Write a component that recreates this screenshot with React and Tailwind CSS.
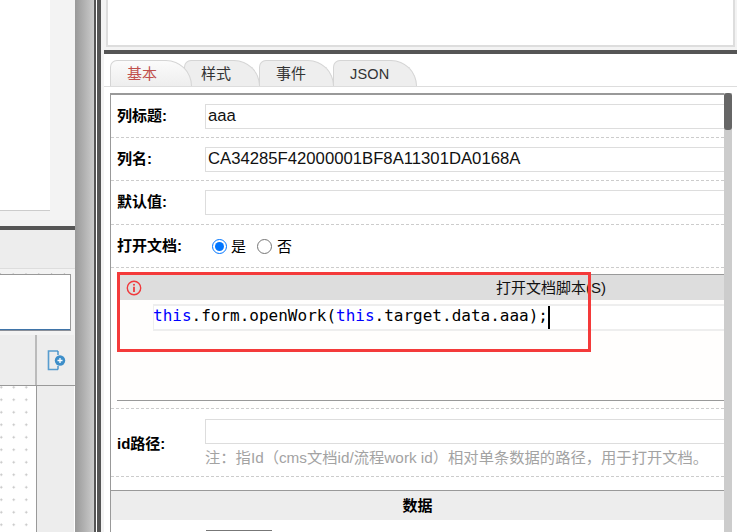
function Row({ label, h, children }) {
  return (
    <div className={`flex items-center shrink-0 ${h} border-b border-dashed border-[#cccccc]`}>
      <div className="w-[94px] shrink-0 pl-[6px] text-[15px] font-bold text-black">{label}</div>
      <div className="flex-1 min-w-0">{children}</div>
    </div>
  );
}

function Field({ value = "" }) {
  return (
    <div className="h-[25px] border-y border-l border-[#dddddd] pl-[2px] text-[16.7px] leading-[22px] text-[#111111] bg-white">
      {value}
    </div>
  );
}

function Radio({ on }) {
  return (
    <span
      className={`inline-flex w-[15px] h-[15px] rounded-full border-[1.5px] items-center justify-center bg-white ${
        on ? "border-[#0075ff]" : "border-[#767676]"
      }`}
    >
      {on && <span className="w-[9px] h-[9px] rounded-full bg-[#0075ff]" />}
    </span>
  );
}

function Tab({ children, active, z, w, ml }) {
  return (
    <div
      className={`relative h-[26px] pl-[16px] ${z} ${w} ${ml} border border-b-0 border-[#d5d5d5] rounded-tl-[7px] rounded-tr-[26px] text-[15px] leading-[26px] ${
        active ? "bg-gradient-to-b from-[#fbfbfb] to-[#eeeeee] text-[#c0504d]" : "bg-[#eeeeee] text-[#333333]"
      }`}
    >
      {children}
    </div>
  );
}

export default function App() {
  return (
    <div className="relative flex w-[737px] h-[532px] overflow-hidden bg-white font-['Liberation_Sans','Noto_Sans_CJK_SC',sans-serif]">
      {/* left column */}
      <div className="w-[75px] h-full shrink-0 flex flex-col bg-[#f3f3f3]">
        <div className="h-[226px] shrink-0">
          <div className="w-[50px] h-[211px] bg-white border-b border-[#cccccc]" />
        </div>
        <div className="h-[4px] shrink-0 bg-[#555555]" />
        <div className="h-[39px] shrink-0 bg-[#ededed] border-b border-[#dddddd]" />
        <div className="h-[66px] shrink-0 flex flex-col">
          <div className="h-[5px] shrink-0 bg-[radial-gradient(circle,#c4c4c4_0.8px,transparent_1px)] bg-[length:12.8px_5px] bg-[position:-6px_2px]" />
          <div className="h-[57px] w-[71px] bg-white border-t-[1.5px] border-r-[1.5px] border-b-[1.5px] border-t-[#999999] border-r-[#999999] border-b-[#8a8f98]">
            <div className="h-full border-b border-[#3f74a8]" />
          </div>
        </div>
        <div className="h-[50px] w-[74px] shrink-0 flex bg-[#ededed]">
          <div className="w-[35px] h-full" />
          <div className="w-[2px] h-full bg-[#bbbbbb]" />
          <div className="flex-1 flex items-center justify-center pl-[2px]">
            <svg width="19" height="21" viewBox="0 0 19 21" fill="none">
              <path d="M11 1H1.5V19.5H11" stroke="#3d8ec9" strokeWidth="1.6" opacity="0.85" />
              <path d="M11 1V5M11 16V19.5" stroke="#3d8ec9" strokeWidth="1.6" opacity="0.85" />
              <circle cx="13" cy="10.5" r="5.2" fill="#3d8ec9" />
              <path d="M10.5 10.5H15.5M13 8V13" stroke="#ffffff" strokeWidth="1.3" />
            </svg>
          </div>
        </div>
        <div className="flex-1 w-[75px] flex border-t border-[#999999]">
          <div className="w-[36px] h-full bg-white bg-[radial-gradient(circle,#c0c0c0_0.9px,transparent_1.1px)] bg-[length:12.5px_12.5px] bg-[position:-5px_-5px] border-r border-[#999999] box-content" />
          <div className="w-[37px] h-full bg-[#ededed]" />
          <div className="w-[1px] h-full bg-white" />
        </div>
      </div>

      {/* splitter */}
      <div className="w-[19px] h-full shrink-0 bg-gradient-to-r from-[#999999] to-[#cccccc]" />
      <div className="w-[1.5px] h-full shrink-0 bg-[#555555]" />
      <div className="w-[1.5px] h-full shrink-0 bg-white" />
      <div className="w-[4px] h-full shrink-0 bg-[#555555]" />
      <div className="w-[3px] h-full shrink-0 bg-[#f3f3f3]" />

      {/* right column */}
      <div className="flex-1 min-w-0 h-full flex flex-col bg-white">
        <div className="h-[50px] shrink-0 bg-[#f3f3f3] px-[2px]">
          <div className="h-[47px] bg-white border-x-2 border-b-2 border-[#dddddd]" />
        </div>
        <div className="h-[4px] shrink-0 bg-[#555555]" />

        {/* tabs */}
        <div className="h-[33px] shrink-0 pt-[6px] pl-[6px] flex items-start border-b border-[#dddddd]">
          <Tab active z="z-40" w="w-[82px]">基本</Tab>
          <Tab z="z-30" w="w-[76px]" ml="-ml-[8px]">样式</Tab>
          <Tab z="z-20" w="w-[75px]" ml="-ml-[1px]">事件</Tab>
          <Tab z="z-10" w="w-[84px]" ml="-ml-[1px]"><span className="text-[14.5px] tracking-[0.2px]">JSON</span></Tab>
        </div>

        {/* form + scrollbar */}
        <div className="flex-1 min-h-0 flex pl-[6px] pt-[6px] overflow-hidden">
          <div className="w-[614px] shrink-0 border-l border-t-2 border-[#999999] flex flex-col">
            <Row label="列标题:" h="h-[43px]"><Field value="aaa" /></Row>
            <Row label="列名:" h="h-[43px]"><Field value="CA34285F42000001BF8A11301DA0168A" /></Row>
            <Row label="默认值:" h="h-[44px]"><Field /></Row>
            <Row label="打开文档:" h="h-[43px]">
              <div className="flex items-center text-[15px] text-black pl-[7px]">
                <Radio on />
                <span className="ml-[4px] mt-[2px]">是</span>
                <span className="ml-[11px] flex"><Radio /></span>
                <span className="ml-[5px] mt-[2px]">否</span>
              </div>
            </Row>

            {/* script editor */}
            <div className="h-[141px] shrink-0 pt-[6px] pl-[6px] flex flex-col bg-[#fffefd] border-b border-dashed border-[#cccccc]">
              <div className="border-t border-[#999999]">
                <div className="relative h-[25px] ml-[3px] bg-[#dddddd] text-[15px] leading-[25px] text-[#111111] pl-[376px] whitespace-nowrap">
                  <svg className="absolute left-[6px] top-[5px]" width="16" height="16" viewBox="0 0 16 16" fill="none">
                    <circle cx="8" cy="8" r="6.7" stroke="#f0393c" strokeWidth="1.4" />
                    <path d="M8 6.8V12" stroke="#f0393c" strokeWidth="1.8" />
                    <circle cx="8" cy="4.7" r="1" fill="#f0393c" />
                  </svg>
                  打开文档脚本(S)
                </div>
              </div>
              <div className="mt-[4px] ml-[36px] h-[27px] border-y-2 border-l border-[#eeeeee] bg-white flex items-center font-['DejaVu_Sans_Mono',monospace] text-[16px] leading-[24px] text-black whitespace-pre">
                <div className="-ml-px -mt-[4px] flex items-center">
                  <span className="text-[#0000ff]">this</span>
                  <span>.form.openWork(</span>
                  <span className="text-[#0000ff]">this</span>
                  <span>.target.data.aaa);</span>
                </div>
                <span className="inline-block w-[2px] h-[23px] bg-black" />
              </div>
              <div className="mt-auto mb-[7px] h-[1.5px] bg-[#999999]" />
            </div>

            <div className="h-[68px] shrink-0 flex items-start border-b border-dashed border-[#cccccc]">
              <div className="w-[94px] shrink-0 pl-[6px] pt-[24px] text-[15px] font-bold text-black">id路径:</div>
              <div className="flex-1 min-w-0 pt-[10px]">
                <div className="h-[25px] border-y border-l border-[#dddddd] bg-white" />
                <div className="mt-[4px] text-[15.3px] leading-[20px] text-[#a3a3a3] whitespace-nowrap">注：指Id（cms文档id/流程work id）相对单条数据的路径，用于打开文档。</div>
              </div>
            </div>

            <div className="mt-[13px] h-[30px] shrink-0 border-t-[1.5px] border-[#999999] bg-[#ededed] text-center text-[15px] font-bold leading-[30px] text-black">
              数据
            </div>
            <div className="ml-[95px] mt-[10px] w-[66px] h-[10px] shrink-0 border-t border-[#777777]" />
          </div>
          <div className="w-[8px] h-full shrink-0 bg-[#cccccc]">
            <div className="w-[8px] h-[37px] rounded-[3px] bg-[#666666]" />
          </div>
        </div>
      </div>

      {/* annotation rectangle drawn over the screenshot */}
      <div className="absolute left-[117px] top-[272px] w-[474px] h-[80px] border-[3px] border-[#f43a3a]" />
    </div>
  );
}
